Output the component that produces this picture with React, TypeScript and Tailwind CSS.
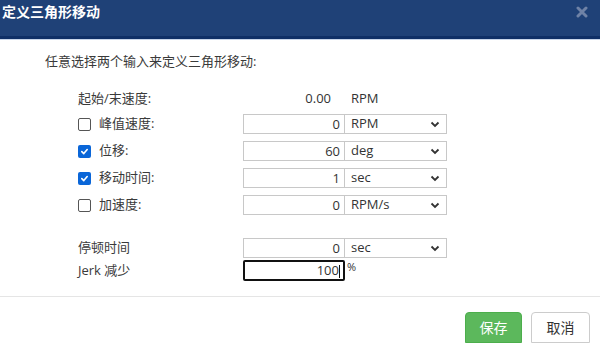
import { ReactNode } from 'react'

const font = { fontFamily: '"Open Sans", "Noto Sans CJK SC", sans-serif' }

function Check({ on }: { on: boolean }) {
  if (on)
    return (
      <span className="w-[13px] h-[13px] rounded-[2px] bg-[#0a66d8] flex items-center justify-center shrink-0">
        <svg width="9" height="9" viewBox="0 0 10 10">
          <path d="M2 5.2 L4.2 7.3 L8 2.8" stroke="white" strokeWidth="1.8" fill="none" strokeLinecap="round" strokeLinejoin="round" />
        </svg>
      </span>
    )
  return <span className="w-[13px] h-[13px] rounded-[2px] border border-[#555] bg-white shrink-0" />
}

function Field({ value, unit }: { value: string; unit: string }) {
  return (
    <div className="flex h-[20px]">
      <div className="w-[102px] border border-[#c8c8c8] bg-white text-right pr-[4px] text-[13px] leading-[18px] text-[#333]">{value}</div>
      <div className="w-[102px] border border-l-0 border-[#c8c8c8] bg-white flex items-center justify-between pl-[6px] pr-[6px] text-[13px] text-[#333]">
        <span>{unit}</span>
        <svg width="10" height="7" viewBox="0 0 10 7">
          <path d="M1.5 1.5 L5 5 L8.5 1.5" stroke="#333" strokeWidth="1.8" fill="none" />
        </svg>
      </div>
    </div>
  )
}

function Row({ check, label, children, h = 'h-[27px]' }: { check?: boolean; label: string; children: ReactNode; h?: string }) {
  return (
    <div className={`flex items-center ${h}`}>
      <div className="w-[165px] flex items-center gap-[8px] text-[13px] text-[#3a3a3a]">
        {check !== undefined && <Check on={check} />}
        <span>{label}</span>
      </div>
      {children}
    </div>
  )
}

export default function App() {
  return (
    <div className="w-[600px] h-[343px] bg-white overflow-hidden flex flex-col" style={font}>
      <div className="h-[39px] bg-[#1f4177] border-b-[3px] border-[#0f2f66] flex items-center justify-between pl-[2px] pr-[12px] shadow-[0_1px_0_#c9d6ea]">
        <span className="text-white font-bold text-[14px] -mt-[13px]">定义三角形移动</span>
        <svg width="12" height="12" viewBox="0 0 12 12" className="-mt-[13px]">
          <path d="M2 2 L10 10 M10 2 L2 10" stroke="#6f82a6" strokeWidth="3" strokeLinecap="round" />
        </svg>
      </div>

      <div className="flex-1 flex flex-col">
        <p className="pl-[45px] pt-[13px] text-[13px] text-[#3a3a3a]">任意选择两个输入来定义三角形移动:</p>

        <div className="pl-[78px] pt-[15px] flex flex-col">
          <Row label="起始/末速度:" h="h-[24px]">
            <div className="flex text-[13px] text-[#333]">
              <span className="w-[88px] text-right">0.00</span>
              <span className="pl-[20px]">RPM</span>
            </div>
          </Row>
          <Row check={false} label="峰值速度:">
            <Field value="0" unit="RPM" />
          </Row>
          <Row check label="位移:">
            <Field value="60" unit="deg" />
          </Row>
          <Row check label="移动时间:">
            <Field value="1" unit="sec" />
          </Row>
          <Row check={false} label="加速度:">
            <Field value="0" unit="RPM/s" />
          </Row>
          <div className="h-[17px]" />
          <Row label="停顿时间" h="h-[25px]">
            <Field value="0" unit="sec" />
          </Row>
          <div className="flex items-center h-[20px]">
            <div className="w-[165px] text-[13px] text-[#3a3a3a]">Jerk 减少</div>
            <div className="w-[102px] h-[21px] border-2 border-[#111] rounded-[2px] bg-white text-right pr-[3px] text-[13px] leading-[17px] text-[#333]">
              100<span className="inline-block w-px h-[13px] bg-[#111] align-middle" />
            </div>
            <span className="text-[11px] text-[#333] self-start -mt-[2px] pl-[2px]">%</span>
          </div>
        </div>
      </div>

      <div className="h-[47px] border-t border-[#e5e5e5] flex items-end justify-end gap-[9px] pr-[10px]">
        <button className="w-[57px] h-[31px] rounded-t-[4px] bg-[#5cb85c] border border-[#4cae4c] text-white text-[14px]">保存</button>
        <button className="w-[59px] h-[31px] rounded-t-[4px] bg-white border border-[#ccc] text-[#333] text-[14px]">取消</button>
      </div>
    </div>
  )
}
